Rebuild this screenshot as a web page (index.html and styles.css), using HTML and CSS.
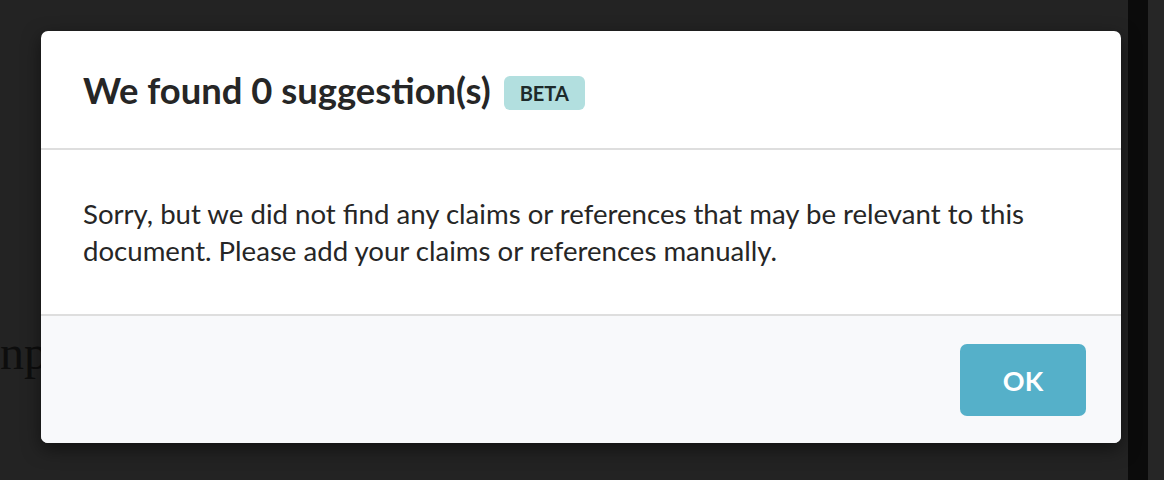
FILE: index.html
```html
<!DOCTYPE html>
<html>
<head>
<meta charset="utf-8">
<link rel="stylesheet" href="styles.css">
</head>
<body>
<div class="page">
  <p class="behind">np</p>
</div>
<div class="scrollbar"><div class="thumb"></div></div>
<div class="overlay">
  <div class="modal">
    <div class="modal-header">
      <h2 class="title">We found 0 suggestion(s)</h2>
      <span class="badge">BETA</span>
    </div>
    <div class="modal-body">
      <p>Sorry, but we did not find any claims or references that may be relevant to this document. Please add your claims or references manually.</p>
    </div>
    <div class="modal-footer">
      <button class="btn-ok">OK</button>
    </div>
  </div>
</div>
</body>
</html>
```
FILE: styles.css
```css
html, body {
  margin: 0;
  padding: 0;
  height: 100%;
  overflow: hidden;
}
body {
  background: #232323;
  font-family: "Liberation Serif", serif;
}
.page {
  padding-top: 323px;
  width: 1128px;
}
.behind {
  margin: 0;
  font-size: 48px;
  line-height: 60px;
  color: #0d0d0d;
  white-space: nowrap;
}
.scrollbar {
  position: absolute;
  top: 0;
  right: 0;
  width: 36px;
  height: 100%;
  background: #262626;
}
.thumb {
  width: 20px;
  height: 100%;
  background: #0b0b0b;
}
.overlay {
  position: absolute;
  inset: 0;
}
.modal {
  position: absolute;
  left: 41px;
  top: 31px;
  width: 1080px;
  background: #fff;
  border-radius: 7px;
  box-shadow: 0 6px 18px rgba(0,0,0,0.5);
  overflow: hidden;
  font-family: Lato, "Liberation Sans", sans-serif;
  color: #262626;
}
.modal-header {
  height: 119px;
  box-sizing: border-box;
  padding: 0 42px;
  display: flex;
  align-items: center;
  gap: 13px;
  border-bottom: 2px solid #dedede;
}
.title {
  margin: 0;
  font-size: 36.4px;
  font-weight: 700;
  color: #262626;
}
.badge {
  background: #b2dfdf;
  color: #1d2a2a;
  font-size: 20px;
  font-weight: 700;
  padding: 0 16px;
  height: 34px;
  line-height: 34px;
  border-radius: 6px;
  margin-top: 6px;
}
.modal-body {
  height: 166px;
  box-sizing: border-box;
  padding: 0 42px;
  display: flex;
  align-items: center;
  border-bottom: 2px solid #dedede;
}
.modal-body p {
  margin: 0;
  font-size: 27.6px;
  line-height: 37px;
  color: #262626;
}
.modal-footer {
  background: #f8f9fb;
  height: 127px;
  box-sizing: border-box;
  padding: 28px 35px 0;
  display: flex;
  justify-content: flex-end;
  align-items: flex-start;
}
.btn-ok {
  width: 126px;
  height: 72px;
  border: none;
  border-radius: 7px;
  background: #55b0c9;
  color: #fff;
  font-family: Lato, sans-serif;
  font-size: 27px;
  font-weight: 700;
}
```
